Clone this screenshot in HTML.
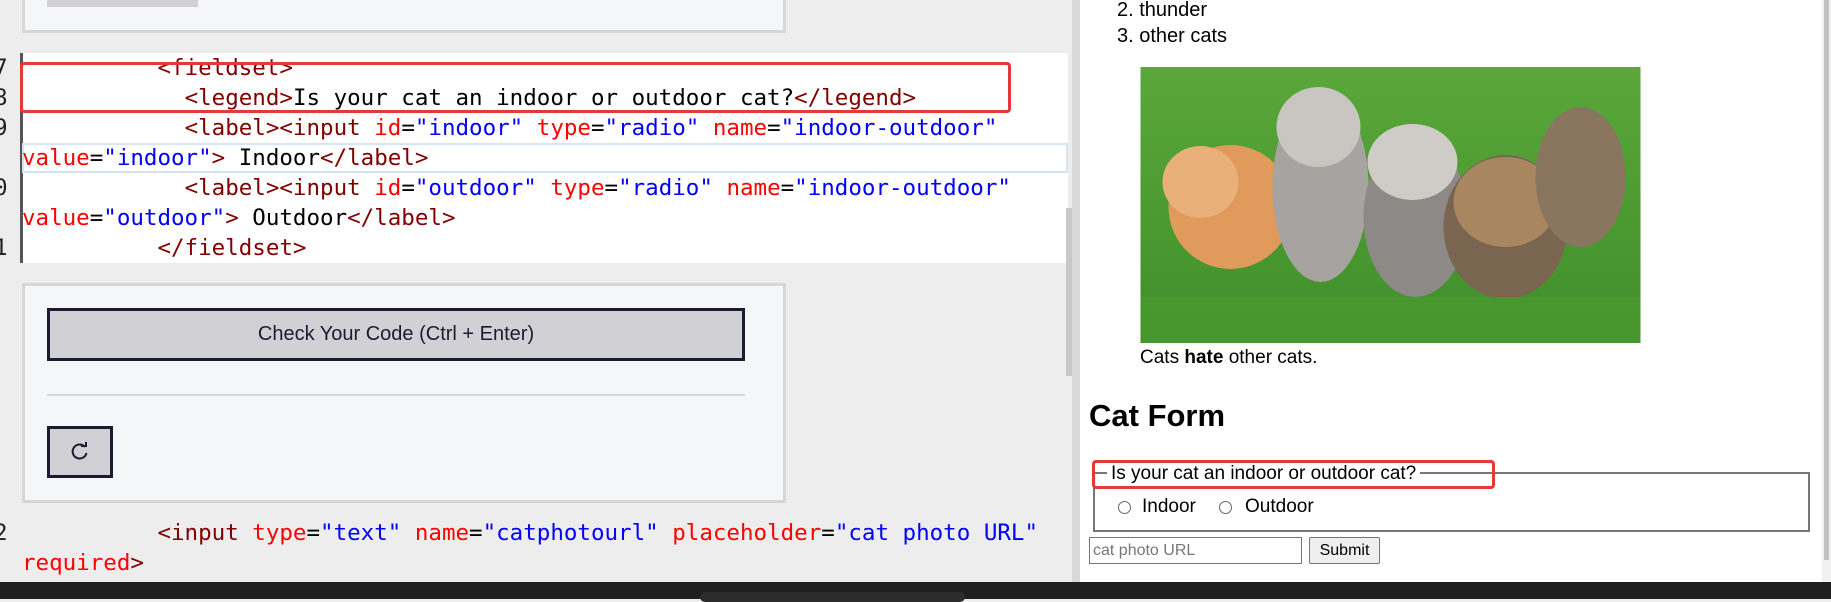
<!DOCTYPE html>
<html><head><meta charset="utf-8"><style>
*{margin:0;padding:0;box-sizing:border-box}
body{width:1831px;height:599px;position:relative;overflow:hidden;background:#ededed;font-family:"Liberation Sans",sans-serif}
.abs{position:absolute}
.code{font-family:"DejaVu Sans Mono","Liberation Mono",monospace;font-size:22.5px;white-space:pre;line-height:30px;color:#000}
.t{color:#800000}.a{color:#ff0000}.v{color:#0000ff}
</style></head><body>
<div class="abs" style="left:22px;top:-5px;width:764px;height:38px;background:#f5f6f7;border:3px solid #d6d6d6;border-top:none"></div>
<div class="abs" style="left:47px;top:0;width:151px;height:7px;background:#d0d0d5"></div>
<div class="abs" style="left:22px;top:53px;width:1046px;height:210px;background:#fff"></div>
<div class="abs" style="left:20px;top:53px;width:3px;height:210px;background:#555"></div>
<div class="abs" style="left:22px;top:143px;width:1046px;height:30px;border:2px solid #d3e5f5"></div>
<div class="abs code" style="left:-6px;top:53px;color:#222">7
8
9

0

1</div>
<div class="abs code" style="left:22px;top:53px"><span>          </span><span class="t">&lt;fieldset&gt;</span>
<span>            </span><span class="t">&lt;legend&gt;</span>Is your cat an indoor or outdoor cat?<span class="t">&lt;/legend&gt;</span>
<span>            </span><span class="t">&lt;label&gt;&lt;input </span><span class="a">id</span>=<span class="v">"indoor"</span> <span class="a">type</span>=<span class="v">"radio"</span> <span class="a">name</span>=<span class="v">"indoor-outdoor"</span>
<span class="a">value</span>=<span class="v">"indoor"</span><span class="t">&gt;</span> Indoor<span class="t">&lt;/label&gt;</span>
<span>            </span><span class="t">&lt;label&gt;&lt;input </span><span class="a">id</span>=<span class="v">"outdoor"</span> <span class="a">type</span>=<span class="v">"radio"</span> <span class="a">name</span>=<span class="v">"indoor-outdoor"</span>
<span class="a">value</span>=<span class="v">"outdoor"</span><span class="t">&gt;</span> Outdoor<span class="t">&lt;/label&gt;</span>
<span>          </span><span class="t">&lt;/fieldset&gt;</span></div>
<div class="abs" style="left:20px;top:62px;width:991px;height:51px;border:3px solid #e5383b;border-radius:4px"></div>
<div class="abs" style="left:22px;top:283px;width:764px;height:220px;background:#f5f6f7;border:3px solid #d6d6d6"></div>
<div class="abs" style="left:47px;top:308px;width:698px;height:53px;background:#d0d0d5;border:3px solid #1b1b32;font-size:20px;color:#1b1b32;text-align:center;line-height:47px">Check Your Code (Ctrl + Enter)</div>
<div class="abs" style="left:47px;top:394px;width:698px;height:2px;background:#d6d6d6"></div>
<div class="abs" style="left:47px;top:426px;width:66px;height:52px;background:#d0d0d5;border:3px solid #1b1b32"></div>
<svg class="abs" style="left:70px;top:442px" width="20" height="20" viewBox="0 0 20 20"><path d="M15 5 A7 7 0 1 0 16.5 11" fill="none" stroke="#1b1b32" stroke-width="2"/><path d="M11 4 L16 4 L16 0" fill="none" stroke="#1b1b32" stroke-width="2"/></svg>
<div class="abs code" style="left:-6px;top:518px;color:#222">2</div>
<div class="abs code" style="left:22px;top:518px"><span>          </span><span class="t">&lt;input </span><span class="a">type</span>=<span class="v">"text"</span> <span class="a">name</span>=<span class="v">"catphotourl"</span> <span class="a">placeholder</span>=<span class="v">"cat photo URL"</span>
<span class="a">required</span><span class="t">&gt;</span></div>
<div class="abs" style="left:1066px;top:208px;width:6px;height:168px;background:#c8c8c8"></div>
<div class="abs" style="left:1072px;top:0;width:8px;height:583px;background:#d8d8d8"></div>
<div class="abs" style="left:1080px;top:0;width:742px;height:583px;background:#fff"></div>
<div class="abs" style="left:1822px;top:0;width:9px;height:583px;background:#f0f0f0"></div>
<div class="abs" style="left:1824px;top:0;width:5px;height:560px;background:#c1c1c1"></div>
<div class="abs" style="left:1117px;top:-3px;font-size:20px;line-height:26px;color:#000">2. thunder<br>3. other cats</div>
<svg class="abs" style="left:1140px;top:67px" width="501" height="276" viewBox="0 0 500 276">
<defs><linearGradient id="g" x1="0" y1="0" x2="0" y2="1"><stop offset="0" stop-color="#5aa83a"/><stop offset="1" stop-color="#3f8e2a"/></linearGradient></defs>
<rect width="500" height="276" fill="url(#g)"/>
<ellipse cx="90" cy="140" rx="62" ry="62" fill="#e09a5c"/>
<ellipse cx="60" cy="115" rx="38" ry="36" fill="#eab07a"/>
<ellipse cx="180" cy="120" rx="48" ry="95" fill="#a6a3a0"/>
<ellipse cx="178" cy="60" rx="42" ry="40" fill="#c9c6c2"/>
<ellipse cx="275" cy="150" rx="52" ry="80" fill="#8c8986"/>
<ellipse cx="272" cy="95" rx="45" ry="38" fill="#cfccc8"/>
<ellipse cx="365" cy="160" rx="62" ry="72" fill="#7a6650"/>
<ellipse cx="365" cy="135" rx="52" ry="45" fill="#a88660"/>
<ellipse cx="440" cy="110" rx="45" ry="70" fill="#8a755e"/>
<rect y="230" width="500" height="46" fill="#4a9a30" opacity=".7"/>
</svg>
<div class="abs" style="left:1140px;top:346px;font-size:19px;line-height:24px">Cats <b>hate</b> other cats.</div>
<div class="abs" style="left:1089px;top:396px;font-size:31px;font-weight:bold;line-height:40px">Cat Form</div>
<div class="abs" style="left:1093px;top:472px;width:717px;height:60px;border:2px solid #767676"></div>
<div class="abs" style="left:1107px;top:462px;background:#fff;padding:0 4px;font-size:19px;line-height:24px">Is your cat an indoor or outdoor cat?</div>
<div class="abs" style="left:1092px;top:460px;width:403px;height:29px;border:3px solid #e5383b;border-radius:4px"></div>
<div class="abs" style="left:1118px;top:501px;width:13px;height:13px;border:1px solid #666;border-radius:50%"></div>
<div class="abs" style="left:1142px;top:494px;font-size:19px;line-height:26px">Indoor</div>
<div class="abs" style="left:1219px;top:501px;width:13px;height:13px;border:1px solid #666;border-radius:50%"></div>
<div class="abs" style="left:1245px;top:494px;font-size:19px;line-height:26px">Outdoor</div>
<div class="abs" style="left:1089px;top:537px;width:213px;height:27px;border:1px solid #767676;font-size:16px;color:#777;padding-left:3px;line-height:25px">cat photo URL</div>
<div class="abs" style="left:1309px;top:537px;width:71px;height:27px;border:1px solid #767676;background:#efefef;border-radius:2px;font-size:16px;text-align:center;line-height:25px">Submit</div>
<div class="abs" style="left:0;top:582px;width:1831px;height:17px;background:#1f1f1f"></div>
<div class="abs" style="left:700px;top:592px;width:265px;height:10px;background:#2c2c2c;border-radius:6px"></div>
</body></html>
